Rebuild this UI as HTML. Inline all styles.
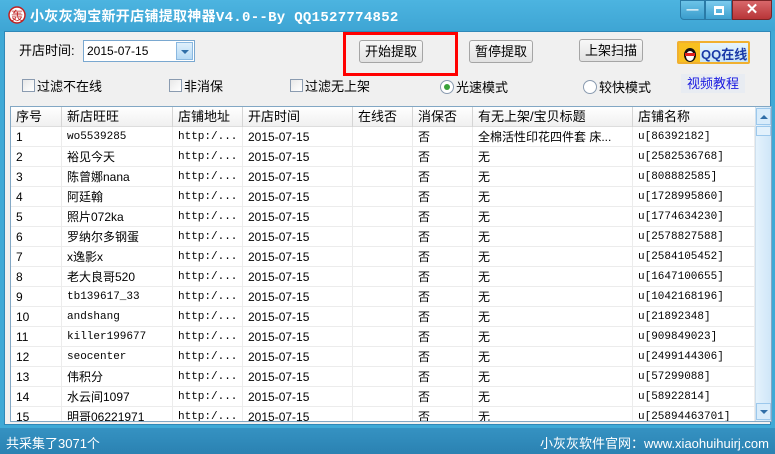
<!DOCTYPE html>
<html><head><meta charset="utf-8"><style>
*{margin:0;padding:0;box-sizing:border-box}
body{width:775px;height:454px;overflow:hidden;background:#3fa9d6;font-family:"Liberation Sans","Noto Sans CJK SC",sans-serif;font-size:12px;color:#000;position:relative}
.a{position:absolute}
.title{left:0;top:0;width:775px;height:31px;background:linear-gradient(#4cb4e0,#3ea5d4)}
.body{left:4px;top:31px;width:767px;height:394px;background:#f0f0f0;border:1px solid #2f88b8}
.btn{position:absolute;height:23px;border:1px solid #a5a5a5;border-radius:3px;background:linear-gradient(#f8f8f8,#e2e2e2);font-size:13px;text-align:center;line-height:21px}
.cb{position:absolute;width:13px;height:13px;border:1px solid #8a9bb0;background:linear-gradient(135deg,#e8e8e8,#fff)}
.lbl{position:absolute;font-size:13px;line-height:16px}
.tbl{left:10px;top:106px;width:762px;height:316px;border:1px solid #82a7c4;background:#fff;overflow:hidden}
.row{position:absolute;left:0;width:744px;height:20px;border-bottom:1px solid #ececec}
.c{position:absolute;top:0;height:20px;line-height:20px;white-space:nowrap;font-size:12px;padding-left:5px;border-right:1px solid #ececec}
.m{font-family:"Liberation Mono","Noto Sans CJK SC",monospace;font-size:11px}
.hd .c{border-right:1px solid #d5d5d5;font-size:13px}
</style></head><body>
<div class="a title"></div>
<svg class="a" style="left:7px;top:5px" width="20" height="20" viewBox="0 0 20 20"><circle cx="10" cy="10" r="8" fill="#fff" stroke="#c02020" stroke-width="1.5"/><text x="10" y="15" font-size="12" fill="#c02020" text-anchor="middle" font-family="Noto Sans CJK SC">轰</text></svg>
<div class="a" style="left:30px;top:6px;color:#fff;font-weight:bold;font-size:14px;font-family:'Liberation Mono','Noto Sans CJK SC',monospace;letter-spacing:0.3px">小灰灰淘宝新开店铺提取神器V4.0--By QQ1527774852</div>
<div class="a" style="left:680px;top:0;width:25px;height:20px;background:linear-gradient(#6cc3e8,#3b9dcc);border:1px solid #2a7aa6;border-radius:0 0 0 4px;color:#fff;text-align:center;line-height:16px;font-weight:bold">—</div>
<div class="a" style="left:705px;top:0;width:27px;height:20px;background:linear-gradient(#7ccbee,#3fa1cf);border:1px solid #2a7aa6"><div class="a" style="left:8px;top:5px;width:10px;height:9px;border:2px solid #fff;border-top-width:3px"></div></div>
<div class="a" style="left:732px;top:0;width:40px;height:20px;background:linear-gradient(#d8676a,#b83538);border:1px solid #7a2426;border-radius:0 0 4px 0;color:#fff;text-align:center;line-height:18px;font-weight:bold;font-size:15px">✕</div>
<div class="a body"></div>
<div class="lbl" style="left:19px;top:43px">开店时间:</div>
<div class="a" style="left:83px;top:40px;width:112px;height:22px;border:1px solid #7aa8d0;background:#fff;font-size:12px;line-height:20px;padding-left:3px">2015-07-15</div>
<div class="a" style="left:176px;top:42px;width:17px;height:18px;background:linear-gradient(#dff0fc,#b6daf5);border:1px solid #8ab8e0"><div class="a" style="left:4px;top:7px;border-left:4px solid transparent;border-right:4px solid transparent;border-top:4px solid #2f6ea8"></div></div>
<div class="a" style="left:343px;top:32px;width:115px;height:44px;border:3px solid #f00"></div>
<div class="btn" style="left:359px;top:40px;width:64px">开始提取</div>
<div class="btn" style="left:469px;top:40px;width:64px">暂停提取</div>
<div class="btn" style="left:579px;top:39px;width:64px">上架扫描</div>
<div class="a" style="left:677px;top:41px;width:73px;height:23px;border:2px solid #f0b030;border-radius:2px;background:linear-gradient(#e6f4fc,#c8e4f6)"></div>
<div class="a" style="left:679px;top:43px;width:21px;height:19px;background:#f8c020"></div>
<svg class="a" style="left:680px;top:43px" width="20" height="20" viewBox="0 0 20 20"><ellipse cx="10" cy="12" rx="6" ry="7" fill="#111"/><ellipse cx="10" cy="13" rx="4" ry="5" fill="#fff"/><rect x="5" y="10" width="10" height="3" fill="#e02020"/></svg>
<div class="a" style="left:701px;top:44px;font-weight:bold;color:#1a3aa8;font-size:13px">QQ在线</div>
<div class="cb" style="left:22px;top:79px"></div><div class="lbl" style="left:37px;top:79px">过滤不在线</div>
<div class="cb" style="left:169px;top:79px"></div><div class="lbl" style="left:184px;top:79px">非消保</div>
<div class="cb" style="left:290px;top:79px"></div><div class="lbl" style="left:305px;top:79px">过滤无上架</div>
<div class="a" style="left:440px;top:80px;width:14px;height:14px;border-radius:50%;border:1px solid #8a9bb0;background:#fff"><div class="a" style="left:3px;top:3px;width:6px;height:6px;border-radius:50%;background:#3aa23a"></div></div>
<div class="lbl" style="left:456px;top:80px">光速模式</div>
<div class="a" style="left:583px;top:80px;width:14px;height:14px;border-radius:50%;border:1px solid #8a9bb0;background:#fff"></div>
<div class="lbl" style="left:599px;top:80px">较快模式</div>
<div class="a" style="left:681px;top:74px;width:64px;height:19px;background:#e8ecf2;color:#1a1ae0;font-size:13px;text-align:center;line-height:19px">视频教程</div>
<div class="a tbl">
<div class="row hd" style="top:0;background:linear-gradient(#fff,#f0f0f0);border-bottom:1px solid #ddd">
<div class="c" style="left:0;width:51px">序号</div><div class="c" style="left:51px;width:111px">新店旺旺</div><div class="c" style="left:162px;width:70px">店铺地址</div><div class="c" style="left:232px;width:110px">开店时间</div><div class="c" style="left:342px;width:60px">在线否</div><div class="c" style="left:402px;width:60px">消保否</div><div class="c" style="left:462px;width:160px">有无上架/宝贝标题</div><div class="c" style="left:622px;width:122px;border:none">店铺名称</div></div>
<div id="rows"></div>
<div class="a" style="left:744px;top:0;width:16px;height:316px;background:linear-gradient(90deg,#e4f2fc,#cfe6f8);border-left:1px solid #cfe0ee">
<div class="a" style="left:0;top:1px;width:15px;height:17px;border:1px solid #9cc8ec;background:#d8ecfb"><div class="a" style="left:3px;top:6px;border-left:4px solid transparent;border-right:4px solid transparent;border-bottom:4px solid #2f6ea8"></div></div>
<div class="a" style="left:0;top:19px;width:15px;height:10px;border:1px solid #9cc8ec;background:#e2f1fc"></div>
<div class="a" style="left:0;top:296px;width:15px;height:17px;border:1px solid #9cc8ec;background:#d8ecfb"><div class="a" style="left:3px;top:6px;border-left:4px solid transparent;border-right:4px solid transparent;border-top:4px solid #2f6ea8"></div></div>
</div>
</div>
<div class="a" style="left:0;top:428px;width:775px;height:26px;background:linear-gradient(#3592c2,#2b82b2)"></div>
<div class="a" style="left:6px;top:433px;color:#fff;font-size:13px">共采集了3071个</div>
<div class="a" style="left:540px;top:433px;color:#fff;font-size:13px">小灰灰软件官网：www.xiaohuihuirj.com</div>
<script>
var d=[["wo5539285","全棉活性印花四件套 床...","u[86392182]",1],["裕见今天","无","u[2582536768]"],["陈曾娜nana","无","u[808882585]"],["阿廷翰","无","u[1728995860]"],["照片072ka","无","u[1774634230]"],["罗纳尔多钢蛋","无","u[2578827588]"],["x逸影x","无","u[2584105452]"],["老大良哥520","无","u[1647100655]"],["tb139617_33","无","u[1042168196]",1],["andshang","无","u[21892348]",1],["killer199677","无","u[909849023]",1],["seocenter","无","u[2499144306]",1],["伟积分","无","u[57299088]"],["水云间1097","无","u[58922814]"],["明哥06221971","无","u[25894463701]"]];
var h="";d.forEach(function(r,i){h+='<div class="row" style="top:'+(20+i*20)+'px"><div class="c" style="left:0;width:51px">'+(i+1)+'</div><div class="c'+(r[3]?' m':'')+'" style="left:51px;width:111px">'+r[0]+'</div><div class="c m" style="left:162px;width:70px">http:/...</div><div class="c" style="left:232px;width:110px">2015-07-15</div><div class="c" style="left:342px;width:60px"></div><div class="c" style="left:402px;width:60px">否</div><div class="c" style="left:462px;width:160px">'+r[1]+'</div><div class="c m" style="left:622px;width:122px">'+r[2]+'</div></div>'});
document.getElementById("rows").innerHTML=h;
</script>
</body></html>
